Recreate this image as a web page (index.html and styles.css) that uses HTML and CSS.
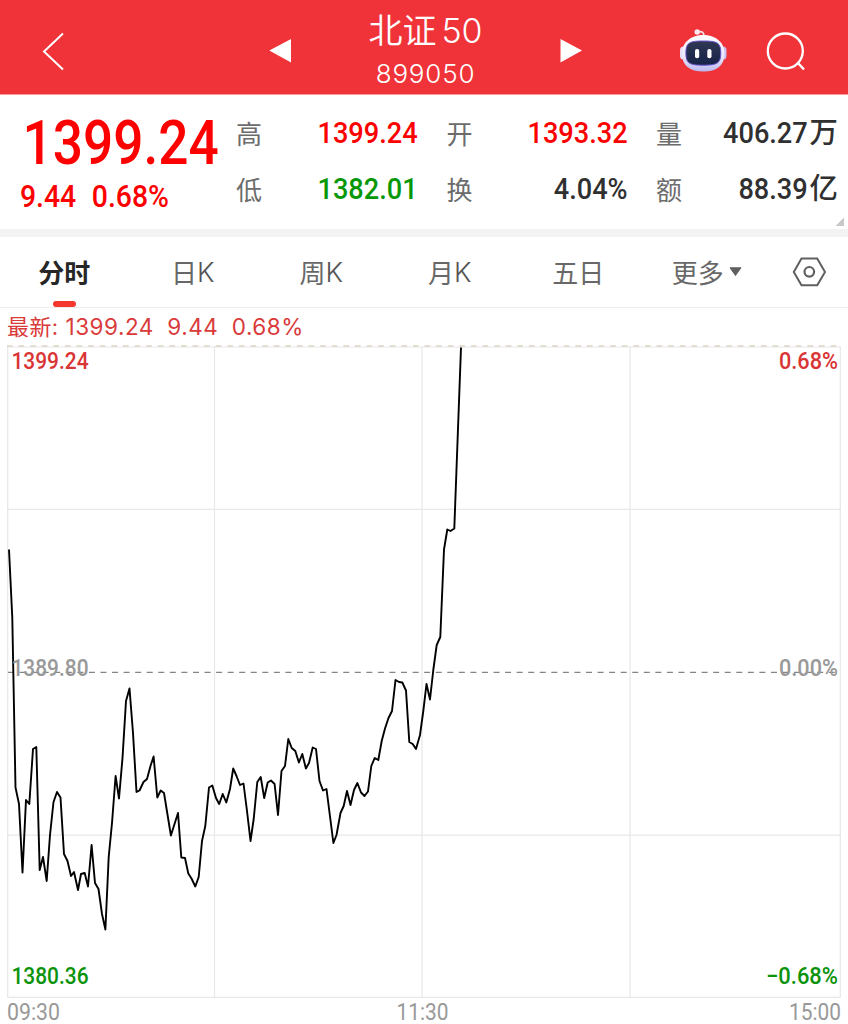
FILE: index.html
```html
<!DOCTYPE html>
<html lang="zh-CN">
<head>
<meta charset="utf-8">
<title>北证50 899050</title>
<link rel="stylesheet" href="styles.css">
</head>
<body>
<header class="header">
  <svg class="header-side" width="269" height="94" viewBox="0 0 269 94">
    <path d="M63 33.5 44 51.5 63 69.5" fill="none" stroke="#fff" stroke-width="2"/>
  </svg>
  <svg class="arrow" width="22" height="94" viewBox="269 0 22 94"><path d="M269.3 50.5 291 39V62.5Z" fill="#fff"/></svg>
  <div class="heading">
    <h1 class="title">北证<span class="title-num">50</span></h1>
    <div class="code">899050</div>
  </div>
  <svg class="arrow" width="22" height="94" viewBox="560 0 22 94"><path d="M582 50.5 560.5 39V62.5Z" fill="#fff"/></svg>
  <svg class="header-side" width="266" height="94" viewBox="582 0 266 94">
    <defs>
      <linearGradient id="shell" x1="0" y1="0" x2="0" y2="1"><stop offset="0" stop-color="#fff"/><stop offset=".6" stop-color="#ece6fa"/><stop offset="1" stop-color="#b9b8f0"/></linearGradient>
      <linearGradient id="visor" x1="0" y1="0" x2="0" y2="1"><stop offset="0" stop-color="#303852"/><stop offset="1" stop-color="#17224a"/></linearGradient>
    </defs>
    <path d="M698 32C702 31 704 32.500 704 36" fill="none" stroke="#f7dfea" stroke-width="1.700"/>
    <circle cx="697.200" cy="32" r="2.700" fill="#fce9ef"/>
    <rect x="680" y="46.500" width="7" height="13" rx="3.500" fill="#e7ddf5"/>
    <rect x="719.500" y="46.500" width="7" height="13" rx="3.500" fill="#c9bff0"/>
    <path d="M703.300 35C715 35 724.500 42 724.500 53.500C724.500 65.500 717 71.500 703.300 71.500C689.500 71.500 682 65.500 682 53.500C682 42 691.500 35 703.300 35Z" fill="url(#shell)"/>
    <path d="M703.300 41C717 41 720.800 42.500 720.800 53C720.800 63.500 717 65.200 703.300 65.200C689.500 65.200 685.900 63.500 685.900 53C685.900 42.500 689.500 41 703.300 41Z" fill="url(#visor)" stroke="#6854cf" stroke-width="1"/>
    <rect x="695" y="49" width="4.200" height="9.300" rx="2" fill="#fff"/>
    <rect x="707.300" y="49" width="4.200" height="9.300" rx="2" fill="#fff"/>
    <circle cx="785.300" cy="51" r="17.500" fill="none" stroke="#fff" stroke-width="2.300"/>
    <path d="M797.500 62.500 804 69.500" stroke="#fff" stroke-width="2.500"/>
  </svg>
</header>

<section class="quote">
  <div class="price-block">
    <div class="price din">1399.24</div>
    <div class="change din"><span>9.44</span><span>0.68%</span></div>
  </div>
  <dl class="stats">
    <div class="stat"><dt>高</dt><dd class="din up">1399.24</dd></div>
    <div class="stat"><dt>开</dt><dd class="din up">1393.32</dd></div>
    <div class="stat"><dt>量</dt><dd class="din">406.27<span class="unit">万</span></dd></div>
    <div class="stat"><dt>低</dt><dd class="din down">1382.01</dd></div>
    <div class="stat"><dt>换</dt><dd class="din">4.04%</dd></div>
    <div class="stat"><dt>额</dt><dd class="din">88.39<span class="unit">亿</span></dd></div>
  </dl>
  <i class="expand"></i>
</section>

<nav class="tabs">
  <a class="tab active">分时</a>
  <a class="tab">日<span class="k">K</span></a>
  <a class="tab">周<span class="k">K</span></a>
  <a class="tab">月<span class="k">K</span></a>
  <a class="tab">五日</a>
  <a class="tab">更多<svg class="caret" width="13" height="10" viewBox="0 0 13 10"><path d="M1 .8H12L6.500 8.500Z" fill="#606060" stroke="#606060" stroke-linejoin="round"/></svg></a>
  <svg class="settings" width="77" height="70" viewBox="771 237 77 70">
    <path d="M801.500 258.500H817.200L825 272 817.200 285.300H801.500L793.800 272Z" fill="none" stroke="#606060" stroke-width="2"/>
    <circle cx="809.300" cy="271.800" r="4.800" fill="none" stroke="#606060" stroke-width="2.200"/>
  </svg>
</nav>

<div class="latest"><span class="latest-label">最新:</span><span>1399.24</span><span>9.44</span><span>0.68%</span></div>

<svg class="chart" width="848" height="679" viewBox="0 345 848 679">
  <g class="grid">
    <path d="M7.700 346V997M214.500 346V997M422 346V997M630 346V997M840.300 346V997M7 509.300H841M7 835.200H841M7 997.300H841M7 347H841"/>
  </g>
  <path class="limit" d="M7 346H841"/>
  <path class="mid" d="M8 672.300H840"/>
  <polyline class="line" points="9,549.500 12.300,618 15.500,787.500 19,804 22.500,872.500 26,800 29.300,804 33,749 36.300,747 39.700,870 43,857 46.700,881 50,835 53.500,802 57,792 60.500,797.500 64,854 67.500,861 71,876 74,872 78,890 81,874 84.700,873 88,886.500 91.600,845 95,883 98.500,889 102,914 105.400,929.500 108.700,857 112,823 115.600,776 119,798.500 122.500,758 126,701 129.500,688.500 133,733 136.500,792 139.500,790.500 143.500,782 147,779 150.500,766 153.600,756.500 157.300,797.500 160.700,790.500 164,793 170.900,835.500 178,813 181.300,857.500 185,858 188.300,873.500 191.500,878.500 195.300,886.500 198.700,877 202,841 205.300,826 209,787.500 212.300,785.500 216,798 219.200,804 222.700,794 226.300,802.500 230,789 233.200,768.500 236.500,776 240,785 243.500,783.500 247,811 250.500,841 253.700,819 257.300,782 260.700,777 264.200,798 267.700,782.500 271,780.500 274.600,784 278,815 281.500,771 285,766 288.300,739 291.700,748 295.300,751 298.900,762.500 302.300,754 305.900,768.500 309,763 312.700,747.500 316,749 319.500,781 323,790.500 326.500,789 333.400,843 336.500,835 340.500,813 343.700,806 347,791 350.500,805 354,790 357.400,783 361,792.500 364.500,796 368,791.500 371.300,766 374.700,758 378.300,760 381.700,741 385,728.500 388.500,718 392,711 395.500,680 399,682 402.300,682.500 406,690.500 409.300,742 412.700,744 416,749 420,735 423.300,711 426.500,684 430,699.500 433.300,670 436.700,645 440.300,637 444,549.500 447.300,529.500 450.500,531 454.300,528.500 461,347.500"/>
  <g class="labels">
    <text class="c-up" x="11.500" y="369" textLength="77" lengthAdjust="spacingAndGlyphs">1399.24</text>
    <text class="c-up" x="779" y="369" textLength="59" lengthAdjust="spacingAndGlyphs">0.68%</text>
    <text class="c-flat" x="11.500" y="676.300" textLength="77" lengthAdjust="spacingAndGlyphs">1389.80</text>
    <text class="c-flat" x="779" y="676.300" textLength="59" lengthAdjust="spacingAndGlyphs">0.00%</text>
    <text class="c-down" x="11.500" y="984" textLength="77" lengthAdjust="spacingAndGlyphs">1380.36</text>
    <text class="c-down" x="766" y="984" textLength="72" lengthAdjust="spacingAndGlyphs">−0.68%</text>
    <text class="c-time" x="7" y="1020.300" textLength="53" lengthAdjust="spacingAndGlyphs">09:30</text>
    <text class="c-time" x="396.500" y="1020.300" textLength="52" lengthAdjust="spacingAndGlyphs">11:30</text>
    <text class="c-time" x="789" y="1020.300" textLength="52" lengthAdjust="spacingAndGlyphs">15:00</text>
  </g>
</svg>
</body>
</html>
```
FILE: styles.css
```css
* { box-sizing: border-box; }
body {
  margin: 0;
  width: 848px;
  background: #fff;
  font-family: Inter, "Noto Sans CJK SC", sans-serif;
  color: #303030;
}
svg { display: block; flex: none; }

.header { display: flex; height: 95px; background: #f03239; border-bottom: 1px solid #f7989b; color: #fff; }
.heading { flex: 1; text-align: center; padding-top: 7px; }
.title { margin: 0; font-size: 34px; line-height: 44px; font-weight: 350; font-family: "Noto Sans CJK SC", sans-serif; height: 44px; white-space: nowrap; }
.title-num { font-family: Inter, sans-serif; font-size: 34px; font-weight: 300; margin-left: 5px; }
.code { font-size: 26px; line-height: 32px; height: 32px; margin-top: 7px; font-weight: 300; letter-spacing: .8px; }

.din { font-family: Roboto, "Noto Sans CJK SC", sans-serif; font-weight: 500; }
.quote { position: relative; display: flex; height: 142px; border-bottom: 8px solid #f3f3f3; }
.price-block { width: 236px; flex: none; padding-left: 20px; color: #fd0000; }
.price { font-size: 61px; line-height: 72px; height: 72px; margin-top: 12px; padding-left: 3px; transform: scaleX(.872); transform-origin: 0 0; white-space: nowrap; }
.change { display: flex; gap: 17px; font-size: 31px; line-height: 36px; transform: scaleX(.915); transform-origin: 0 0; white-space: nowrap; }
.stats { margin: 0; padding-top: 10px; width: 602px; display: grid; grid-template-columns: 182px 181px 182px; grid-auto-rows: 56px; column-gap: 28.500px; }
.stat { display: flex; justify-content: space-between; align-items: center; }
.stat dt { font-family: "Noto Sans CJK SC", sans-serif; font-size: 26px; line-height: 56px; font-weight: 400; color: #6c6c6c; }
.stat dd { margin: 0; font-size: 30px; line-height: 56px; transform: scaleX(.905); transform-origin: 100% 0; white-space: nowrap; }
.unit { display: inline-block; font-size: 29px; line-height: 30px; font-weight: 500; transform: scaleX(1.08); transform-origin: 100% 0; margin-left: 4px; }
.up { color: #fd0000; }
.down { color: #079707; }
.expand { position: absolute; right: 4px; bottom: 3px; width: 9px; height: 9px; background: linear-gradient(135deg, transparent 50%, #c9c9c9 50%); }

.tabs { display: flex; height: 71px; border-bottom: 1px solid #ececec; }
.tab { position: relative; width: 128.500px; height: 70px; display: flex; justify-content: center; align-items: center; font-family: "Noto Sans CJK SC", sans-serif; font-size: 26px; font-weight: 400; line-height: 70px; color: #686868; }
.k { font-family: Inter, sans-serif; font-size: 27px; font-weight: 300; color: #555; padding-top: 2px; }
.active { color: #262626; font-weight: 700; }
.active::after { content: ""; position: absolute; left: 53px; bottom: 0; width: 23px; height: 6px; border-radius: 3px; background: #f5382f; }
.caret { margin-left: 5px; }

.latest { display: flex; height: 37px; padding-left: 7px; font-size: 22.500px; line-height: 38px; color: #d93a3a; letter-spacing: .5px; }
.latest span { margin-right: 13.500px; }
.latest .latest-label { font-size: 22px; letter-spacing: .4px; margin-right: 7px; }

.grid { fill: none; stroke: #e8e8e8; stroke-width: 1.200; }
.limit { fill: none; stroke: #ddd3c3; stroke-width: 1.300; stroke-dasharray: 5.600 6; }
.mid { fill: none; stroke: #858585; stroke-width: 1.200; stroke-dasharray: 6 5.560; }
.line { fill: none; stroke: #000; stroke-width: 1.900; stroke-linejoin: round; }
.labels { font-family: Roboto, sans-serif; font-size: 23px; font-weight: 500; }
.c-up { fill: #d93535; }
.c-flat { fill: #999; }
.c-down { fill: #0b930b; }
.c-time { fill: #999; font-weight: 400; }
```
